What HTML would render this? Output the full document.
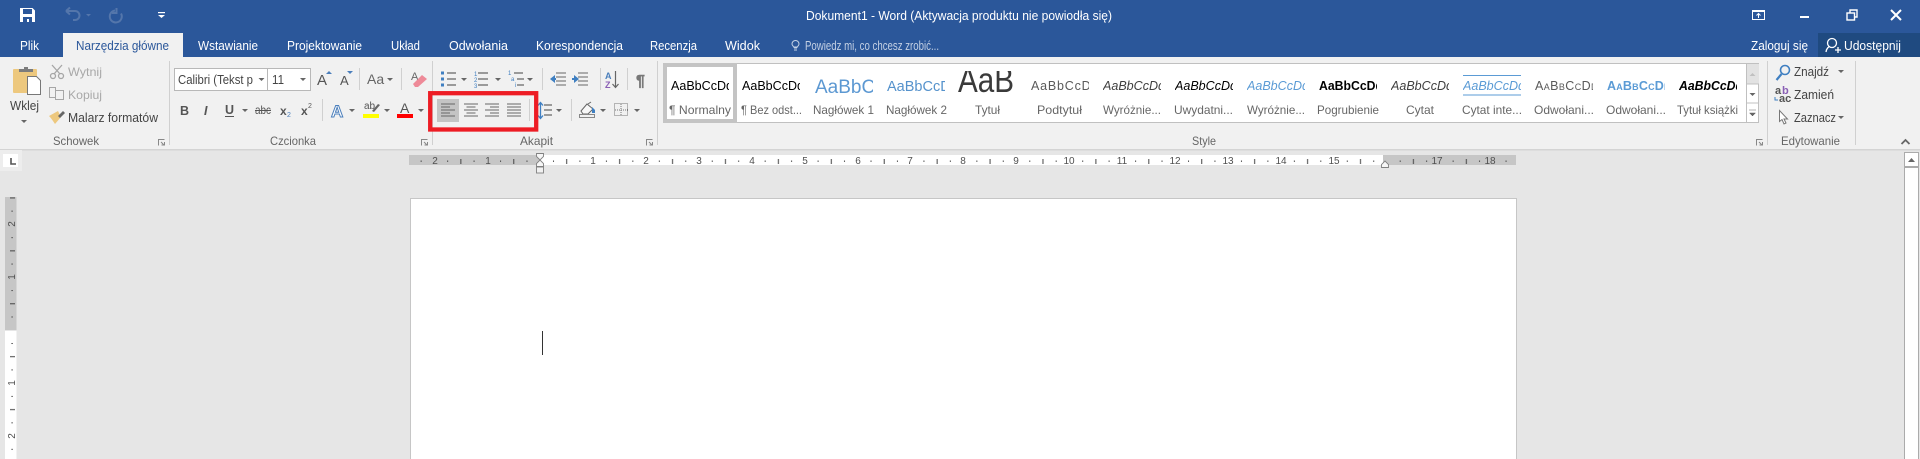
<!DOCTYPE html>
<html lang="pl"><head><meta charset="utf-8"><title>Dokument1 - Word</title>
<style>
html,body{margin:0;padding:0;width:1920px;height:459px;overflow:hidden;background:#e6e6e6}
svg{display:block}
#m{filter:blur(.3px)}
text{font-family:"Liberation Sans",sans-serif;font-size:12px;fill:#555}
.tab{font-size:12.5px;fill:#fff}
.g{fill:#a8a8a8}
.d{fill:#444}
.l{fill:#666}
.p{font-size:12.5px;fill:#000}
.r{font-size:10px;fill:#505050;text-anchor:middle}
.sep{fill:#d0d0d0}
</style></head><body>
<svg id="m" xmlns="http://www.w3.org/2000/svg" width="1920" height="459" viewBox="0 0 1920 459">
<defs>
<pattern id="hr" patternUnits="userSpaceOnUse" x="540" y="155" width="52.92" height="10">
<rect x="13" y="5.5" width="1" height="1.4" fill="#444"/><rect x="26.2" y="4" width="1" height="5" fill="#444"/><rect x="39.4" y="5.5" width="1" height="1.4" fill="#444"/>
</pattern>
<pattern id="vr" patternUnits="userSpaceOnUse" x="5" y="330" width="12" height="52.92">
<rect x="6.4" y="13" width="1.4" height="1" fill="#444"/><rect x="5" y="26.2" width="5" height="1" fill="#444"/><rect x="6.4" y="39.4" width="1.4" height="1" fill="#444"/>
</pattern>
</defs>
<!-- backgrounds -->
<rect width="1920" height="459" fill="#e6e6e6"/>
<rect width="1920" height="57" fill="#2b579a"/>
<rect y="57" width="1920" height="92" fill="#f1f1f1"/>
<rect y="149" width="1920" height="1.5" fill="#d4d4d4"/>
<rect x="63" y="33" width="120" height="24" fill="#f1f1f1"/>
<rect x="1818" y="33" width="102" height="24" fill="#1f4a80"/>

<!-- QAT -->
<path d="M20 8h12.5l2.5 2.5V22H20z" fill="#fff"/>
<rect x="23" y="9" width="9" height="5" fill="#2b579a"/><rect x="23" y="17" width="9" height="5" fill="#2b579a"/><rect x="27" y="19" width="2" height="3" fill="#fff"/>
<path d="M66 11h9a4.500 4.500 0 0 1 0 9h-2M66 11l4-3.500M66 11l4 3.500" fill="none" stroke="#5476ab" stroke-width="2"/>
<path d="M86 14h5l-2.500 2.500z" fill="#5476ab"/>
<path d="M115 10.500a6 6 0 1 0 6 3M116.500 8v5h-4.500" fill="none" stroke="#5476ab" stroke-width="2"/>
<rect x="158" y="12" width="7" height="1.200" fill="#fff"/><path d="M158 15h7l-3.500 3z" fill="#fff"/>

<!-- tabs -->
<text class="tab" x="20" y="50" textLength="19" lengthAdjust="spacingAndGlyphs">Plik</text>
<text class="tab" x="76" y="50" textLength="93" lengthAdjust="spacingAndGlyphs" style="fill:#2b579a">Narzędzia główne</text>
<text class="tab" x="198" y="50" textLength="60" lengthAdjust="spacingAndGlyphs">Wstawianie</text>
<text class="tab" x="287" y="50" textLength="75" lengthAdjust="spacingAndGlyphs">Projektowanie</text>
<text class="tab" x="391" y="50" textLength="29" lengthAdjust="spacingAndGlyphs">Układ</text>
<text class="tab" x="449" y="50" textLength="59" lengthAdjust="spacingAndGlyphs">Odwołania</text>
<text class="tab" x="536" y="50" textLength="87" lengthAdjust="spacingAndGlyphs">Korespondencja</text>
<text class="tab" x="650" y="50" textLength="47" lengthAdjust="spacingAndGlyphs">Recenzja</text>
<text class="tab" x="725" y="50" textLength="35" lengthAdjust="spacingAndGlyphs">Widok</text>
<path d="M794 50h3M794 48h3M792 44a3.500 3.500 0 1 1 7 0c0 1.500-1.500 2-1.500 3h-4c0-1-1.500-1.500-1.500-3z" fill="none" stroke="#c6d3e6" stroke-width="1"/>
<text class="tab" x="805" y="50" textLength="134" lengthAdjust="spacingAndGlyphs" style="fill:#c3d0e4;font-size:13px">Powiedz mi, co chcesz zrobić...</text>
<text class="tab" x="806" y="20" textLength="306" lengthAdjust="spacingAndGlyphs">Dokument1 - Word (Aktywacja produktu nie powiodła się)</text>
<text class="tab" x="1751" y="50" textLength="57" lengthAdjust="spacingAndGlyphs">Zaloguj się</text>
<text class="tab" x="1844" y="50" textLength="57" lengthAdjust="spacingAndGlyphs">Udostępnij</text>
<circle cx="1832" cy="43" r="4.500" fill="none" stroke="#fff" stroke-width="1.300"/>
<path d="M1826 52c.5-4 3-5.500 4-5.500M1835 50h6M1838 47v6" fill="none" stroke="#fff" stroke-width="1.300"/>

<!-- window controls -->
<rect x="1752.500" y="10.500" width="12" height="9" fill="none" stroke="#fff"/><rect x="1752" y="10" width="13" height="2" fill="#fff"/><path d="M1758.500 18v-4M1756.500 15.500l2-2 2 2" fill="none" stroke="#fff"/>
<rect x="1800" y="16" width="9" height="2" fill="#fff"/>
<rect x="1847" y="13" width="7.500" height="7" fill="none" stroke="#fff" stroke-width="1.400"/><path d="M1850 13v-3h7v7h-2.500" fill="none" stroke="#fff" stroke-width="1.400"/>
<path d="M1891 10l10 10M1901 10l-10 10" stroke="#fff" stroke-width="2"/>

<!-- clipboard -->
<rect x="13" y="69" width="24" height="24" rx="1" fill="#edc87e"/>
<path d="M19 72v-3h5v-2h4v2h5v3z" fill="#7c7c7c"/>
<path d="M27.500 76.500h9l4 4v14h-13z" fill="#fff" stroke="#777"/>
<text class="d" x="10" y="110" textLength="29" lengthAdjust="spacingAndGlyphs" style="font-size:12.500px">Wklej</text>
<path d="M21 120h6l-3 3z" fill="#666"/>
<path d="M52 65l8 9M62 65l-8 9" stroke="#a6a6a6" stroke-width="1.300" fill="none"/><circle cx="53" cy="76" r="2.500" fill="none" stroke="#a6a6a6" stroke-width="1.300"/><circle cx="61" cy="76" r="2.500" fill="none" stroke="#a6a6a6" stroke-width="1.300"/>
<text class="g" x="68" y="76" textLength="34" lengthAdjust="spacingAndGlyphs">Wytnij</text>
<path d="M49.500 87.500h6v10h-6zM55.500 90.500h8v9h-8z" fill="#f1f1f1" stroke="#a6a6a6"/>
<text class="g" x="68" y="99" textLength="34" lengthAdjust="spacingAndGlyphs">Kopiuj</text>
<path d="M49 116l9-5 3 6-6 7c-2-3-4-6-6-8z" fill="#edc87e"/><path d="M58 116l5-5 2 2-5 5z" fill="#666"/>
<text class="d" x="68" y="122" textLength="90" lengthAdjust="spacingAndGlyphs" style="font-size:12.500px">Malarz formatów</text>
<text class="l" x="53" y="145" textLength="46" lengthAdjust="spacingAndGlyphs">Schowek</text>
<path d="M158.500 145.500v-6h6M161 142l3 3M161.500 145h3v-3" fill="none" stroke="#888"/>
<rect class="sep" x="169" y="61" width="1" height="84"/>

<!-- font -->
<rect x="174.500" y="68.500" width="93" height="22" fill="#fff" stroke="#b8b8b8"/>
<rect x="267.500" y="68.500" width="43" height="22" fill="#fff" stroke="#b8b8b8"/>
<text class="d" x="178" y="84" textLength="75" lengthAdjust="spacingAndGlyphs" style="font-size:12.500px">Calibri (Tekst p</text>
<text class="d" x="272" y="84" textLength="12" lengthAdjust="spacingAndGlyphs" style="font-size:12.500px">11</text>
<path d="M258.500 78h6l-3 3zM300 78h6l-3 3z" fill="#666"/>
<text x="317" y="85" style="font-size:15px;fill:#555">A</text><path d="M326 74l3-3 3 3z" fill="#4a7ebb"/>
<text x="340" y="85" style="font-size:13px;fill:#555">A</text><path d="M347 71h6l-3 3z" fill="#4a7ebb"/>
<rect class="sep" x="359" y="68" width="1" height="22"/>
<text x="367" y="84" style="font-size:14px;fill:#666">Aa</text><path d="M387 78h6l-3 3z" fill="#666"/>
<rect class="sep" x="401" y="68" width="1" height="22"/>
<text x="411" y="80" style="font-size:11px;fill:#666">A</text><path d="M413 84l9-9 5 4-9 8h-3z" fill="#ee8a98"/>
<text x="180" y="115" style="font-size:12.500px;font-weight:700;fill:#555">B</text>
<text x="204" y="115" style="font-size:12.500px;font-style:italic;font-weight:700;fill:#555">I</text>
<text x="225" y="114" style="font-size:12.500px;font-weight:700;fill:#555">U</text><rect x="225" y="116" width="9" height="1" fill="#555"/>
<path d="M242 109h6l-3 3z" fill="#666"/>
<text x="255" y="114" textLength="16" lengthAdjust="spacingAndGlyphs" style="font-size:12px;fill:#555">abc</text><rect x="255" y="110" width="16" height="1" fill="#555"/>
<text x="280" y="115" style="font-size:12px;font-weight:700;fill:#555">x</text><text x="287" y="117" style="font-size:7px;fill:#4a7ebb">2</text>
<text x="301" y="115" style="font-size:12px;font-weight:700;fill:#555">x</text><text x="308" y="108" style="font-size:7px;fill:#555">2</text>
<rect class="sep" x="322" y="99" width="1" height="22"/>
<text x="331" y="117" style="font-size:17px;font-weight:700;fill:#fff;stroke:#4a7ebb;stroke-width:1">A</text>
<path d="M349 109h6l-3 3z" fill="#666"/>
<text x="364" y="109" style="font-size:10px;fill:#555">ab</text><path d="M372 111l6-7 2 1-6 7z" fill="#666"/><rect x="363" y="114" width="16" height="4" fill="#ff0"/>
<path d="M384 109h6l-3 3z" fill="#666"/>
<text x="400" y="113" style="font-size:14px;fill:#555">A</text><rect x="397" y="114" width="16" height="4" fill="#f00"/>
<path d="M418 109h6l-3 3z" fill="#666"/>
<text class="l" x="270" y="145" textLength="46" lengthAdjust="spacingAndGlyphs">Czcionka</text>
<path d="M421.500 145.500v-6h6M424 142l3 3M424.500 145h3v-3" fill="none" stroke="#888"/>
<rect class="sep" x="432" y="61" width="1" height="84"/>

<!-- paragraph top row -->
<path d="M441 71.500h3v3h-3zM441 77.500h3v3h-3zM441 83.500h3v3h-3z" fill="#3f7fc1"/>
<path d="M447 73h9M447 79h9M447 85h9M478 73h10M478 79h10M478 85h10M514 73h9M517 79h7M517 85h7" stroke="#666" stroke-width="1.200" fill="none"/>
<text x="474" y="76" style="font-size:6px;fill:#3f7fc1">1</text><text x="474" y="82" style="font-size:6px;fill:#3f7fc1">2</text><text x="474" y="88" style="font-size:6px;fill:#3f7fc1">3</text>
<text x="508" y="75" style="font-size:6px;fill:#3f7fc1">1</text><text x="511" y="81" style="font-size:6px;fill:#3f7fc1">a</text><text x="515" y="87" style="font-size:6px;fill:#3f7fc1">i</text>
<path d="M461 78h6l-3 3zM495 78h6l-3 3zM527 78h6l-3 3z" fill="#666"/>
<rect class="sep" x="542" y="68" width="1" height="22"/>
<path d="M556 73h10M556 77h10M556 81h10M556 85h10" stroke="#666" stroke-width="1.100"/><path d="M550 79l5-4v8z" fill="#3f7fc1"/><rect x="554" y="78" width="2" height="2" fill="#3f7fc1"/>
<path d="M578 73h10M578 77h10M578 81h10M578 85h10" stroke="#666" stroke-width="1.100"/><path d="M579 79l-5-4v8z" fill="#3f7fc1"/><rect x="572" y="78" width="2" height="2" fill="#3f7fc1"/>
<rect class="sep" x="600" y="68" width="1" height="22"/>
<text x="605" y="79" style="font-size:9px;font-weight:700;fill:#4a7ebb">A</text><text x="605" y="88" style="font-size:9px;font-weight:700;fill:#8a5fb5">Z</text>
<path d="M615.500 71v16M612.500 84l3 3.500 3-3.500" stroke="#666" fill="none" stroke-width="1.200"/>
<rect class="sep" x="627" y="68" width="1" height="22"/>
<text x="636" y="86" style="font-size:16px;font-weight:700;fill:#777;stroke:#777;stroke-width:.5">¶</text>

<!-- alignment row -->
<rect x="437" y="99" width="22" height="23" fill="#c4c4c4"/>
<path d="M441 104h14M441 107h9M441 110h14M441 113h9M441 116h14" stroke="#666" stroke-width="1" fill="none"/>
<path d="M464 104h14M466.500 107h9M464 110h14M466.500 113h9M464 116h14" stroke="#666" stroke-width="1" fill="none"/>
<path d="M485 104h14M490 107h9M485 110h14M490 113h9M485 116h14" stroke="#666" stroke-width="1" fill="none"/>
<path d="M507 104h14M507 107h14M507 110h14M507 113h14M507 116h14" stroke="#666" stroke-width="1" fill="none"/>
<rect class="sep" x="529" y="99" width="1" height="22"/>
<path d="M540.500 103v15M538 105.500l2.500-3 2.500 3M538 115.500l2.500 3 2.500-3" stroke="#3f7fc1" fill="none" stroke-width="1.300"/>
<path d="M544 105h8M544 110h8M544 115h8" stroke="#666" stroke-width="1.200"/>
<path d="M556 109h6l-3 3z" fill="#666"/>
<rect class="sep" x="571" y="99" width="1" height="22"/>
<path d="M581 111l6-7 6 5-5 5h-5zM588 104l3-2" fill="#f8f8f8" stroke="#666"/><path d="M592 107l3 3v3h-3z" fill="#3f7fc1"/>
<rect x="579.500" y="114.500" width="15" height="3" fill="#f1f1f1" stroke="#888"/>
<path d="M600 109h6l-3 3z" fill="#666"/>
<rect x="614.500" y="103.500" width="13" height="12" fill="none" stroke="#777" stroke-dasharray="1 1"/><path d="M621 104v12M615 110h13" stroke="#777" stroke-dasharray="1 1"/>
<path d="M634 109h6l-3 3z" fill="#666"/>
<text class="l" x="520" y="145" textLength="33" lengthAdjust="spacingAndGlyphs">Akapit</text>
<path d="M646.500 145.500v-6h6M649 142l3 3M649.500 145h3v-3" fill="none" stroke="#888"/>
<rect class="sep" x="657" y="61" width="1" height="84"/>

<!-- red box -->
<rect x="430.200" y="93.200" width="106" height="36.300" fill="none" stroke="#ed1c24" stroke-width="4.300"/>

<!-- styles gallery -->
<rect x="663.500" y="63.500" width="1095" height="59" fill="#fff" stroke="#c0c0c0"/>
<rect x="665" y="65" width="70" height="56" fill="#fff" stroke="#c4c4c4" stroke-width="4"/>
<rect x="1746" y="64" width="13" height="20" fill="#e2e2e2"/>
<path d="M1746.500 64v58M1746 84h13M1746 103h13" stroke="#c0c0c0" fill="none"/>
<path d="M1749.500 76l3-3 3 3z" fill="#c0c0c0"/><path d="M1749.500 93h6l-3 3z" fill="#666"/><path d="M1749 110h7M1749.500 113h6l-3 3z" fill="#666" stroke="#666" stroke-width=".5"/>

<svg x="671" y="60" width="58" height="50"><text class="p" x="0" y="30" textLength="62" lengthAdjust="spacingAndGlyphs">AaBbCcDd</text></svg>
<svg x="742" y="60" width="58" height="50"><text class="p" x="0" y="30" textLength="62" lengthAdjust="spacingAndGlyphs">AaBbCcDd</text></svg>
<svg x="815" y="60" width="58" height="50"><text x="0" y="33" style="font-size:19px;fill:#5c98d2">AaBbCc</text></svg>
<svg x="887" y="60" width="58" height="50"><text x="0" y="31" style="font-size:14.500px;fill:#5592cc">AaBbCcD</text></svg>
<svg x="957" y="71" width="60" height="30"><text x="1" y="21" textLength="56" lengthAdjust="spacingAndGlyphs" style="font-size:35px;fill:#3a3a3a">AaB</text></svg>
<svg x="1031" y="60" width="58" height="50"><text x="0" y="30" style="font-size:12.500px;fill:#5a5a5a;letter-spacing:.8px">AaBbCcD</text></svg>
<svg x="1103" y="60" width="58" height="50"><text class="p" x="0" y="30" textLength="62" lengthAdjust="spacingAndGlyphs" style="font-style:italic;fill:#404040">AaBbCcDd</text></svg>
<svg x="1175" y="60" width="58" height="50"><text class="p" x="0" y="30" textLength="62" lengthAdjust="spacingAndGlyphs" style="font-style:italic">AaBbCcDd</text></svg>
<svg x="1247" y="60" width="58" height="50"><text class="p" x="0" y="30" textLength="62" lengthAdjust="spacingAndGlyphs" style="font-style:italic;fill:#5b9bd5">AaBbCcDd</text></svg>
<svg x="1319" y="60" width="58" height="50"><text class="p" x="0" y="30" textLength="64" lengthAdjust="spacingAndGlyphs" style="font-weight:700">AaBbCcDd</text></svg>
<svg x="1391" y="60" width="58" height="50"><text class="p" x="0" y="30" textLength="62" lengthAdjust="spacingAndGlyphs" style="font-style:italic;fill:#404040">AaBbCcDd</text></svg>
<rect x="1463" y="75" width="58" height="1" fill="#5b9bd5"/><rect x="1463" y="94.500" width="58" height="1" fill="#5b9bd5"/>
<svg x="1463" y="60" width="58" height="50"><text class="p" x="0" y="30" textLength="62" lengthAdjust="spacingAndGlyphs" style="font-style:italic;fill:#5b9bd5">AaBbCcDd</text></svg>
<svg x="1535" y="60" width="58" height="50"><text x="0" y="30" style="font-size:12.500px;fill:#5a5a5a;font-variant:small-caps;letter-spacing:.4px">AaBbCcDd</text></svg>
<svg x="1607" y="60" width="58" height="50"><text x="0" y="30" style="font-size:12.500px;fill:#5b9bd5;font-weight:700;font-variant:small-caps;letter-spacing:.2px">AaBbCcDd</text></svg>
<svg x="1679" y="60" width="58" height="50"><text class="p" x="0" y="30" textLength="64" lengthAdjust="spacingAndGlyphs" style="font-style:italic;font-weight:700">AaBbCcDd</text></svg>

<text class="l" x="669" y="114" textLength="62" lengthAdjust="spacingAndGlyphs">¶ Normalny</text>
<text class="l" x="741" y="114" textLength="61" lengthAdjust="spacingAndGlyphs">¶ Bez odst...</text>
<text class="l" x="813" y="114" textLength="61" lengthAdjust="spacingAndGlyphs">Nagłówek 1</text>
<text class="l" x="886" y="114" textLength="61" lengthAdjust="spacingAndGlyphs">Nagłówek 2</text>
<text class="l" x="975" y="114" textLength="25" lengthAdjust="spacingAndGlyphs">Tytuł</text>
<text class="l" x="1037" y="114" textLength="45" lengthAdjust="spacingAndGlyphs">Podtytuł</text>
<text class="l" x="1103" y="114" textLength="58" lengthAdjust="spacingAndGlyphs">Wyróżnie...</text>
<text class="l" x="1174" y="114" textLength="59" lengthAdjust="spacingAndGlyphs">Uwydatni...</text>
<text class="l" x="1247" y="114" textLength="58" lengthAdjust="spacingAndGlyphs">Wyróżnie...</text>
<text class="l" x="1317" y="114" textLength="62" lengthAdjust="spacingAndGlyphs">Pogrubienie</text>
<text class="l" x="1406" y="114" textLength="28" lengthAdjust="spacingAndGlyphs">Cytat</text>
<text class="l" x="1462" y="114" textLength="60" lengthAdjust="spacingAndGlyphs">Cytat inte...</text>
<text class="l" x="1534" y="114" textLength="60" lengthAdjust="spacingAndGlyphs">Odwołani...</text>
<text class="l" x="1606" y="114" textLength="60" lengthAdjust="spacingAndGlyphs">Odwołani...</text>
<text class="l" x="1677" y="114" textLength="61" lengthAdjust="spacingAndGlyphs">Tytuł książki</text>
<text class="l" x="1192" y="145" textLength="24" lengthAdjust="spacingAndGlyphs">Style</text>
<path d="M1756.500 145.500v-6h6M1759 142l3 3M1759.500 145h3v-3" fill="none" stroke="#888"/>
<rect class="sep" x="1767" y="61" width="1" height="84"/>

<!-- editing -->
<circle cx="1785" cy="70" r="4.500" fill="none" stroke="#3f7fc1" stroke-width="1.600"/><path d="M1781.500 74l-5 6" stroke="#3f7fc1" stroke-width="2.200"/>
<text class="d" x="1794" y="76" textLength="35" lengthAdjust="spacingAndGlyphs" style="font-size:12.500px">Znajdź</text><path d="M1838 70h6l-3 3z" fill="#666"/>
<text x="1775" y="94" style="font-size:11px;font-weight:700;fill:#555">a</text><text x="1782" y="94" style="font-size:11px;font-weight:700;fill:#8a5fb5">b</text>
<text x="1779" y="102" style="font-size:11px;font-weight:700;fill:#555">ac</text><path d="M1775 97v3h3" fill="none" stroke="#3f7fc1"/>
<text class="d" x="1794" y="99" textLength="40" lengthAdjust="spacingAndGlyphs" style="font-size:12.500px">Zamień</text>
<path d="M1779.500 110.500v11l2.500-2 2 4.500 2-1-2-4h3.500z" fill="#fff" stroke="#777"/>
<text class="d" x="1794" y="122" textLength="42" lengthAdjust="spacingAndGlyphs" style="font-size:12.500px">Zaznacz</text><path d="M1838 116h6l-3 3z" fill="#666"/>
<text class="l" x="1781" y="145" textLength="59" lengthAdjust="spacingAndGlyphs">Edytowanie</text>
<rect class="sep" x="1855" y="61" width="1" height="84"/>
<path d="M1901.500 144l4-4 4 4" fill="none" stroke="#666" stroke-width="1.800"/>

<!-- ruler corner -->
<rect x="0" y="150" width="22" height="21" fill="#ededed"/>
<rect x="3" y="154" width="15" height="13" fill="#fff"/>
<path d="M11 158v6h5" fill="none" stroke="#555" stroke-width="1.600"/>

<!-- horizontal ruler -->
<rect x="409" y="155" width="131" height="10" fill="#c6c6c6"/>
<rect x="540" y="155" width="843" height="10" fill="#fff"/>
<rect x="1383" y="155" width="133" height="10" fill="#c6c6c6"/>
<rect x="409" y="155" width="1107" height="10" fill="url(#hr)"/>
<text class="r" x="435" y="164">2</text><text class="r" x="488" y="164">1</text>
<text class="r" x="593" y="164">1</text><text class="r" x="646" y="164">2</text><text class="r" x="699" y="164">3</text><text class="r" x="752" y="164">4</text><text class="r" x="805" y="164">5</text><text class="r" x="858" y="164">6</text><text class="r" x="910" y="164">7</text><text class="r" x="963" y="164">8</text><text class="r" x="1016" y="164">9</text><text class="r" x="1069" y="164">10</text><text class="r" x="1122" y="164">11</text><text class="r" x="1175" y="164">12</text><text class="r" x="1228" y="164">13</text><text class="r" x="1281" y="164">14</text><text class="r" x="1334" y="164">15</text><text class="r" x="1437" y="164">17</text><text class="r" x="1490" y="164">18</text>
<path d="M536.500 153.500h7v3l-3.500 3.500-3.500-3.500zM536.500 166.500v-3l3.500-3.500 3.500 3.500v3z" fill="#f6f6f6" stroke="#808080" stroke-width=".9"/>
<rect x="536.500" y="167" width="7" height="6" fill="#f1f1f1" stroke="#808080" stroke-width=".9"/>
<path d="M1381.500 167.500v-3l3.500-3.500 3.500 3.500v3z" fill="#f6f6f6" stroke="#808080" stroke-width=".9"/>

<!-- vertical ruler -->
<rect x="5" y="197" width="11.500" height="133" fill="#c6c6c6"/>
<rect x="5" y="331" width="11.500" height="128" fill="#fff"/>
<rect x="5" y="197" width="12" height="262" fill="url(#vr)"/>
<text class="r" transform="translate(15 224) rotate(-90)">2</text>
<text class="r" transform="translate(15 277) rotate(-90)">1</text>
<text class="r" transform="translate(15 383) rotate(-90)">1</text>
<text class="r" transform="translate(15 436) rotate(-90)">2</text>

<!-- page -->
<rect x="410.500" y="198.500" width="1106" height="270" fill="#fff" stroke="#c6c6c6"/>
<rect x="542" y="331" width="1" height="24" fill="#333"/>

<!-- scrollbar -->
<rect x="1904.500" y="152.500" width="14" height="310" fill="#fff" stroke="#ababab"/>
<rect x="1904" y="166" width="15" height="2" fill="#ababab"/>
<path d="M1908 162l3.500-4 3.500 4z" fill="#666"/>
</svg>
</body></html>
